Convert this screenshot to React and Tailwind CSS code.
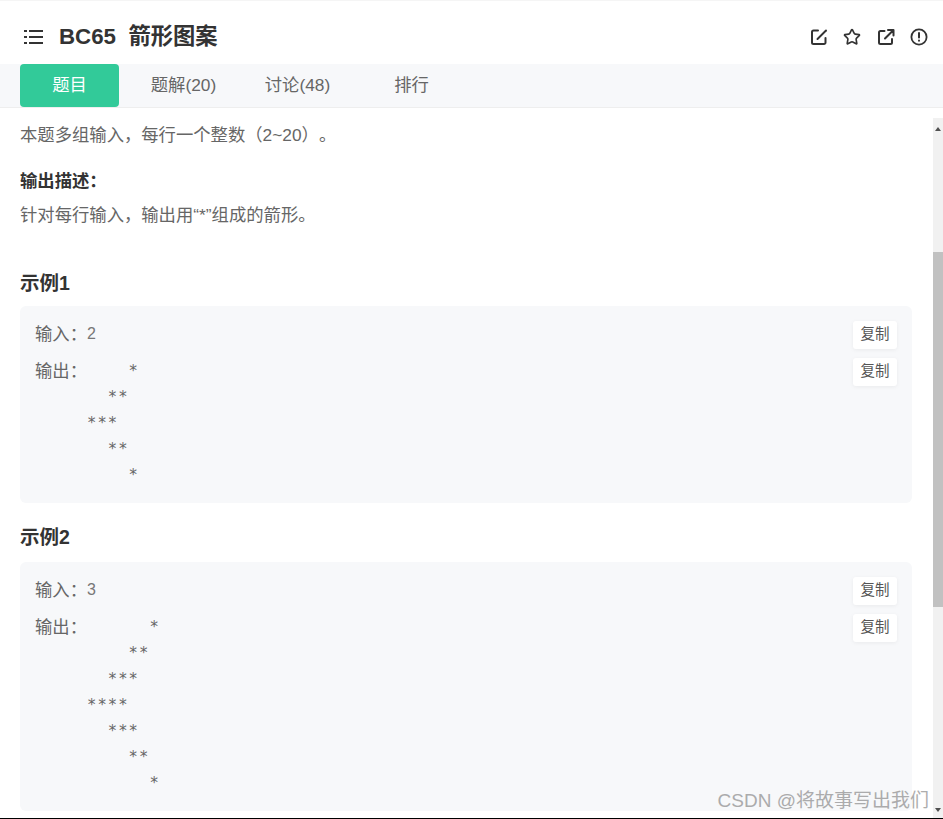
import { Star } from "lucide-react";

const font = { fontFamily: '"Liberation Sans", "Noto Sans CJK SC", sans-serif' };

function CopyButton() {
  return (
    <button className="w-[44px] h-[28px] bg-white rounded-[3px] shadow-[0_1px_4px_rgba(0,0,0,0.06)] text-[14.5px] text-[#555] flex items-center justify-center">
      复制
    </button>
  );
}

function Example({ title, input, output, boxClass }) {
  return (
    <div>
      <h3 className="text-[19.5px] leading-[26px] font-bold text-[#333]">{title}</h3>
      <div className={`bg-[#f7f8fa] rounded-[6px] pl-[15px] pr-[15px] pt-[15px] ${boxClass}`}>
        <div className="flex items-start justify-between">
          <div className="flex items-center h-[28px]">
            <span className="w-[52px] text-[17.33px] text-[#666]">输入：</span>
            <span className="text-[16px] text-[#777] mb-[3px]">{input}</span>
          </div>
          <CopyButton />
        </div>
        <div className="flex items-start justify-between mt-[9px]">
          <div className="flex items-start">
            <span className="w-[52px] text-[17.33px] leading-[26px] text-[#666]">输出：</span>
            <pre className="font-['DejaVu_Sans_Mono'] text-[15.5px] leading-[26px] tracking-[1.07px] text-[#666]">{output}</pre>
          </div>
          <CopyButton />
        </div>
      </div>
    </div>
  );
}

export default function App() {
  return (
    <div className="relative w-[943px] h-[819px] overflow-hidden bg-white flex flex-col border-t border-[#f5f5f5] border-b border-b-black [text-spacing-trim:space-all]" style={font}>
      {/* header */}
      <div className="h-[63px] flex items-center justify-between pt-[9px] pl-[24px] pr-[15px] shrink-0">
        <div className="flex items-center">
          <svg width="19" height="14" viewBox="0 0 19 14" className="text-[#333]" fill="none" stroke="currentColor" strokeWidth="2">
            <path d="M0 1h3M5 1h14M0 7h3M5 7h14M0 13h3M5 13h14" />
          </svg>
          <h1 className="ml-[16px] text-[22.3px] font-bold text-[#333] whitespace-pre">BC65  箭形图案</h1>
        </div>
        <div className="flex items-center gap-[15.5px] text-[#333]">
          <svg width="18" height="18" viewBox="0 0 18 18" fill="none" stroke="currentColor" strokeWidth="2" strokeLinecap="round" strokeLinejoin="round">
            <path d="M8 2.5H3.5a1.5 1.5 0 0 0-1.5 1.5v10.5a1.5 1.5 0 0 0 1.5 1.5H14a1.5 1.5 0 0 0 1.5-1.5V10" />
            <path d="M7.5 11l8.5-8.5" />
          </svg>
          <Star size={18} strokeWidth={2.2} />
          <svg width="18" height="18" viewBox="0 0 18 18" fill="none" stroke="currentColor" strokeWidth="2" strokeLinecap="round" strokeLinejoin="round">
            <path d="M7.5 3H3.5A1.5 1.5 0 0 0 2 4.5v10A1.5 1.5 0 0 0 3.5 16h10a1.5 1.5 0 0 0 1.5-1.5V11" />
            <path d="M8 10.5L16 2.5M11 2h5.5v5.5" />
          </svg>
          <svg width="18" height="18" viewBox="0 0 18 18" fill="none" stroke="currentColor" strokeWidth="1.8" strokeLinecap="round">
            <circle cx="9" cy="9" r="7.6" />
            <path d="M9 5v4.6M9 12.6v.2" strokeWidth="2" />
          </svg>
        </div>
      </div>

      {/* tabs */}
      <div className="h-[44px] shrink-0 bg-[#f7f8fa] border-b border-[#eeeeee] flex pl-[20px] text-[17.33px] text-[#666]">
        <div className="w-[99px] h-[43px] rounded-[4px] bg-[#32ca99] text-white flex items-center justify-center">题目</div>
        <div className="w-[129px] flex items-center justify-center">题解(20)</div>
        <div className="w-[99px] flex items-center justify-center">讨论(48)</div>
        <div className="w-[129px] flex items-center justify-center">排行</div>
      </div>

      <div className="flex-1 flex min-h-0">
        <div className="flex-1 overflow-hidden pl-[20px] pr-[21px] pt-[14px]">
          <p className="text-[17.33px] leading-[26px] text-[#666]">本题多组输入，每行一个整数（2~20）。</p>
          <p className="mt-[20px] text-[17.33px] leading-[26px] font-bold text-[#333]">输出描述：</p>
          <p className="mt-[8px] text-[17.33px] leading-[26px] text-[#666]">针对每行输入，输出用“*”组成的箭形。</p>
          <div className="mt-[42px]">
            <Example title="示例1" input="2" output={"    *\n  **\n***\n  **\n    *"} boxClass="mt-[10px] h-[197px]" />
          </div>
          <div className="mt-[21px]">
            <Example title="示例2" input="3" output={"      *\n    **\n  ***\n****\n  ***\n    **\n      *"} boxClass="mt-[12px] h-[249px]" />
          </div>
        </div>

        {/* scrollbar */}
        <div className="relative w-[10px] mt-[10px] bg-[#f1f1f1] shrink-0 flex flex-col">
          <div className="h-[134px] shrink-0" />
          <div className="h-[355px] bg-[#c1c1c1]" />
          <div className="absolute top-[9px] left-[2px] w-0 h-0 border-x-[3px] border-x-transparent border-b-[4px] border-b-[#505050]" />
          <div className="absolute bottom-[6px] left-[2px] w-0 h-0 border-x-[3px] border-x-transparent border-t-[4px] border-t-[#505050]" />
        </div>
      </div>

      <div className="absolute right-[14px] bottom-[4px] text-[19px] leading-[26px] text-[#999] opacity-80">CSDN @将故事写出我们</div>
    </div>
  );
}
